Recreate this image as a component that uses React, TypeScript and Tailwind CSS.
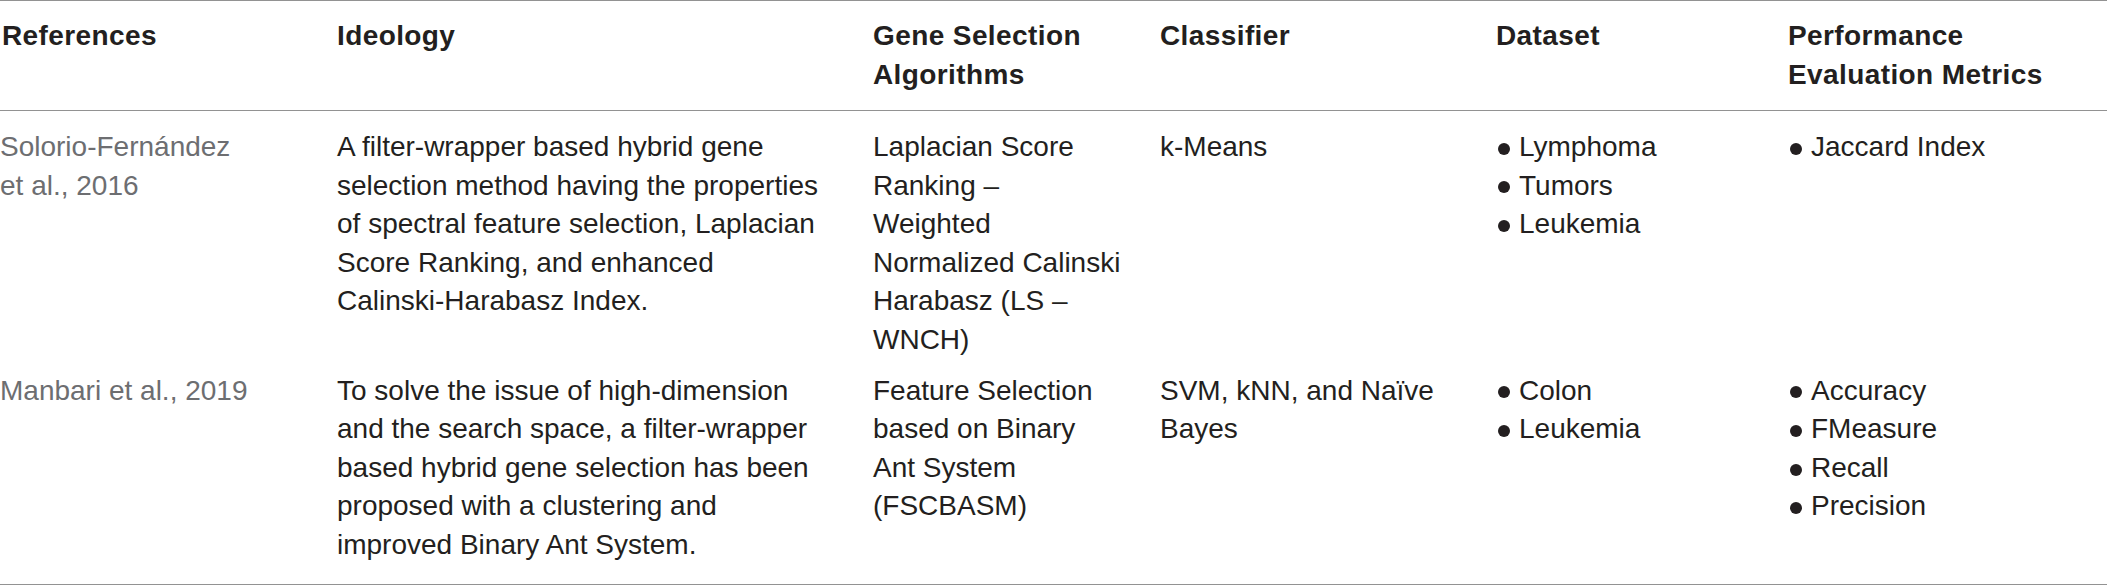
import React from 'react';

type Row = {
    refs: string[];
    ideology: string[];
    algo: string[];
    classifier: string[];
    dataset: string[];
    metrics: string[];
};

const rows: Row[] = [
    {
        refs: ['Solorio-Fernández', 'et al., 2016'],
        ideology: [
            'A filter-wrapper based hybrid gene',
            'selection method having the properties',
            'of spectral feature selection, Laplacian',
            'Score Ranking, and enhanced',
            'Calinski-Harabasz Index.',
        ],
        algo: ['Laplacian Score', 'Ranking –', 'Weighted', 'Normalized Calinski', 'Harabasz (LS –', 'WNCH)'],
        classifier: ['k-Means'],
        dataset: ['Lymphoma', 'Tumors', 'Leukemia'],
        metrics: ['Jaccard Index'],
    },
    {
        refs: ['Manbari et al., 2019'],
        ideology: [
            'To solve the issue of high-dimension',
            'and the search space, a filter-wrapper',
            'based hybrid gene selection has been',
            'proposed with a clustering and',
            'improved Binary Ant System.',
        ],
        algo: ['Feature Selection', 'based on Binary', 'Ant System', '(FSCBASM)'],
        classifier: ['SVM, kNN, and Naïve', 'Bayes'],
        dataset: ['Colon', 'Leukemia'],
        metrics: ['Accuracy', 'FMeasure', 'Recall', 'Precision'],
    },
];

const cols = 'grid grid-cols-[337px_536px_287px_338px_290px_1fr]';

function Lines({ lines, className = '' }: { lines: string[]; className?: string }) {
    return (
        <div className={className}>
            {lines.map((l) => (
                <div key={l} className="whitespace-nowrap">{l}</div>
            ))}
        </div>
    );
}

function Bullets({ items }: { items: string[] }) {
    return (
        <div>
            {items.map((t) => (
                <div key={t} className="flex items-center gap-[9px] whitespace-nowrap">
                    <span className="mt-[3px] w-[12px] h-[12px] rounded-full bg-[#231f20] shrink-0" />
                    <span>{t}</span>
                </div>
            ))}
        </div>
    );
}

export default function App() {
    return (
        <div
            className="w-[2107px] min-h-[586px] bg-white text-[#231f20]"
            style={{ fontFamily: '"Liberation Sans", Arial, sans-serif' }}
        >
            <div className="border-t border-b border-[#929292]">
                {/* Header */}
                <div className={`${cols} h-[110px] pt-[16px] border-b border-[#929292] text-[28px] leading-[38.6px] font-bold tracking-[0.4px]`}>
                    <div className="pl-[2px]">References</div>
                    <div>Ideology</div>
                    <div>Gene Selection<br />Algorithms</div>
                    <div>Classifier</div>
                    <div className="-ml-[2px]">Dataset</div>
                    <div>Performance<br />Evaluation Metrics</div>
                </div>

                {/* Body */}
                <div className="pt-[5px] pb-[19px] text-[28px] leading-[38.6px]">
                    {rows.map((r, i) => (
                        <div key={i} className={`${cols} pt-[12px]`}>
                            <Lines lines={r.refs} className="text-[#6d6e71]" />
                            <Lines lines={r.ideology} />
                            <Lines lines={r.algo} />
                            <Lines lines={r.classifier} />
                            <Bullets items={r.dataset} />
                            <div className="pl-[2px]">
                                <Bullets items={r.metrics} />
                            </div>
                        </div>
                    ))}
                </div>
            </div>
        </div>
    );
}
